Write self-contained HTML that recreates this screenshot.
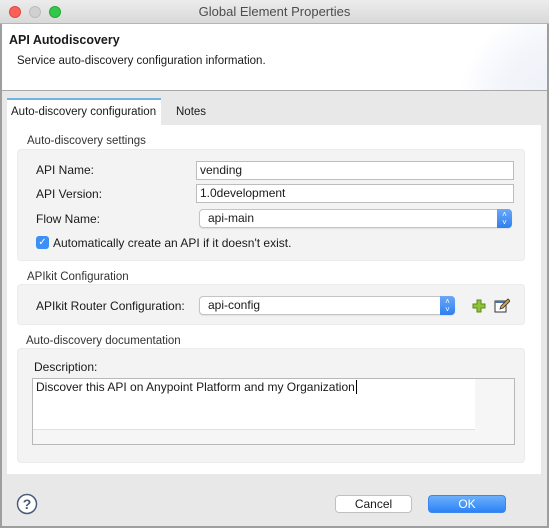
<!DOCTYPE html>
<html><head><style>
*{box-sizing:border-box;margin:0;padding:0}
body{width:549px;height:528px;overflow:hidden;font-family:"Liberation Sans",sans-serif;font-size:12px;color:#1a1a1a;background:#e8e8e8;position:relative}
.win{position:absolute;left:0;top:0;width:549px;height:528px;border:2px solid #9e9e9e;border-top:1px solid #bdbdbd;background:#e8e8e8}
.abs{position:absolute}
.title{left:0;top:0;width:549px;height:24px;background:linear-gradient(#ececec,#d9d9d9);border-bottom:1px solid #b5b5b5;text-align:center;line-height:24px;font-size:13px;color:#4d4d4d}
.dot{width:12px;height:12px;border-radius:50%;top:6px}
.hdr{left:2px;top:24px;width:545px;height:67px;background:#fff;border-bottom:1px solid #a8a8a8;overflow:hidden}
.panel{left:7px;top:125px;width:534px;height:349px;background:#fff}
.grp{background:#f3f3f3;border:1px solid #ebebeb;border-radius:4px}
.inp{background:#fff;border:1px solid #bdbdbd;height:19px;line-height:17px;padding-left:3px;font-size:12px}
.combo{background:#fff;border:1px solid #c4c4c4;border-radius:4px;height:19px;line-height:17px;padding-left:8px;box-shadow:0 1px 1px rgba(0,0,0,.08)}
.arr{position:absolute;right:-1px;top:-1px;width:15px;height:19px;background:linear-gradient(#6aa8f8,#2f7ff0);border-radius:0 4px 4px 0;color:#fff;font-size:8px;line-height:8px;text-align:center;padding-top:2px}
.btn{height:18px;border-radius:4px;text-align:center;line-height:16px;font-size:12px}
</style></head><body>
<div class="win"></div>
<div class="abs title">Global Element Properties</div>
<div class="abs dot" style="left:9px;background:#fc5f57;border:1px solid #de4a42"></div>
<div class="abs dot" style="left:29px;background:#d0d0d0;border:1px solid #bcbcbc"></div>
<div class="abs dot" style="left:49px;background:#34c84a;border:1px solid #26a83a"></div>
<div class="abs hdr">
 <div class="abs" style="left:440px;top:-10px;width:180px;height:140px;border-radius:50%;background:radial-gradient(circle at 70% 70%,#eceff8 0%,#f3f5fb 45%,rgba(255,255,255,0) 70%)"></div>
 <div class="abs" style="left:7px;top:9px;font-weight:bold;font-size:12.5px">API Autodiscovery</div>
 <div class="abs" style="left:15px;top:31px;font-size:11.5px">Service auto-discovery configuration information.</div>
</div>
<div class="abs" style="left:7px;top:98px;width:154px;height:28px;background:#fff;border-top:2px solid #6fb3e0"></div>
<div class="abs" style="left:11px;top:106px;font-size:11.5px">Auto-discovery configuration</div>
<div class="abs" style="left:176px;top:106px;font-size:11.5px">Notes</div>
<div class="abs panel"></div>
<div class="abs" style="left:27px;top:135px;font-size:11.5px;color:#333">Auto-discovery settings</div>
<div class="abs grp" style="left:17px;top:149px;width:508px;height:112px"></div>
<div class="abs" style="left:36px;top:163px">API Name:</div>
<div class="abs inp" style="left:196px;top:161px;width:318px">vending</div>
<div class="abs" style="left:36px;top:187px">API Version:</div>
<div class="abs inp" style="left:196px;top:184px;width:318px">1.0development</div>
<div class="abs" style="left:36px;top:212px">Flow Name:</div>
<div class="abs combo" style="left:199px;top:209px;width:313px">api-main<div class="arr">˄<br>˅</div></div>
<div class="abs" style="left:36px;top:236px;width:13px;height:13px;background:#3d8ef5;border-radius:3px;color:#fff;font-size:10px;line-height:13px;text-align:center">✓</div>
<div class="abs" style="left:53px;top:236px">Automatically create an API if it doesn't exist.</div>
<div class="abs" style="left:27px;top:271px;font-size:11.5px;color:#333">APIkit Configuration</div>
<div class="abs grp" style="left:17px;top:284px;width:508px;height:41px"></div>
<div class="abs" style="left:36px;top:299px">APIkit Router Configuration:</div>
<div class="abs combo" style="left:199px;top:296px;width:256px">api-config<div class="arr">˄<br>˅</div></div>
<svg class="abs" style="left:472px;top:299px" width="14" height="14"><path d="M5 1h4v4h4v4H9v4H5V9H1V5h4z" fill="#8fc43a" stroke="#5b8a1e" stroke-width="1"/></svg>
<svg class="abs" style="left:494px;top:298px" width="16" height="15"><rect x="1" y="3" width="11" height="11" fill="#fff" stroke="#333"/><rect x="1" y="3" width="11" height="2" fill="#4a6fb0"/><path d="M6 11l1-3 7-7 2 2-7 7z" fill="#d9a441" stroke="#333" stroke-width=".8"/></svg>
<div class="abs" style="left:26px;top:335px;font-size:11.5px;color:#333">Auto-discovery documentation</div>
<div class="abs grp" style="left:17px;top:348px;width:508px;height:115px"></div>
<div class="abs" style="left:34px;top:360px">Description:</div>
<div class="abs" style="left:32px;top:378px;width:483px;height:67px;border:1px solid #b8b8b8;background:#f6f6f6"></div>
<div class="abs" style="left:33px;top:379px;width:442px;height:51px;background:#fff;border-bottom:1px solid #e0e0e0"></div>
<div class="abs" style="left:36px;top:380px">Discover this API on Anypoint Platform and my Organization<span style="border-left:1px solid #000;margin-left:1px"></span></div>
<svg class="abs" style="left:16px;top:493px" width="22" height="22"><circle cx="11" cy="11" r="9.5" fill="#fff" stroke="#4a5a7a" stroke-width="1.5"/><text x="11" y="16" text-anchor="middle" font-family="Liberation Sans" font-weight="bold" font-size="14" fill="#4a5a7a">?</text></svg>
<div class="abs btn" style="left:335px;top:495px;width:77px;background:#fff;border:1px solid #c0c0c0">Cancel</div>
<div class="abs btn" style="left:428px;top:495px;width:78px;background:linear-gradient(#6cb0fb,#2c82f6);color:#fff;border:1px solid #3a86ee">OK</div>
</body></html>
